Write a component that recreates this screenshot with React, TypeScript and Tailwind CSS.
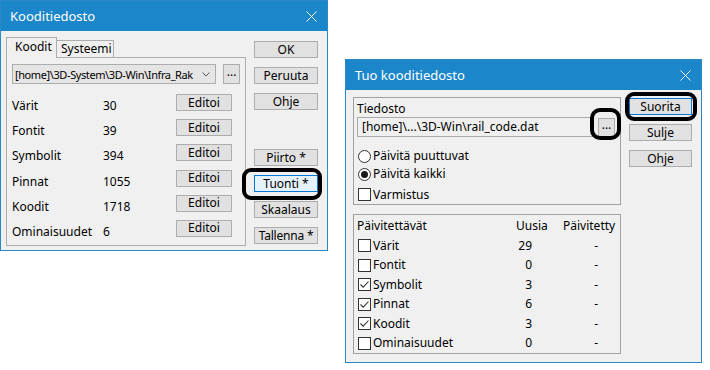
import React from "react";

function Btn({ children, className = "" }: { children: React.ReactNode; className?: string }) {
  return (
    <div
      className={
        "flex items-center justify-center border bg-[#e1e1e1] text-[12px] leading-none whitespace-nowrap " +
        (className.includes("border-[") ? className : "border-[#adadad] " + className)
      }
    >
      {children}
    </div>
  );
}

function TitleBar({ title, pl }: { title: string; pl: string }) {
  return (
    <div className={"flex h-[30px] items-center justify-between bg-[#1b86c9] text-white " + pl}>
      <span className="text-[13px] leading-none">{title}</span>
      <svg width="11" height="11" viewBox="0 0 11 11" className="mr-[10px]">
        <path d="M0.5 0.5 L10.5 10.5 M10.5 0.5 L0.5 10.5" stroke="white" strokeWidth="1" />
      </svg>
    </div>
  );
}

function Check({ checked }: { checked?: boolean }) {
  return (
    <div className="flex h-[13px] w-[13px] shrink-0 items-center justify-center border border-[#333] bg-white">
      {checked && (
        <svg width="11" height="11" viewBox="0 0 11 11">
          <path d="M1.5 5.5 L4.2 8.2 L9.5 2.5" stroke="#333" strokeWidth="1.1" fill="none" />
        </svg>
      )}
    </div>
  );
}

function Radio({ checked }: { checked?: boolean }) {
  return (
    <div className="flex h-[13px] w-[13px] shrink-0 items-center justify-center rounded-full border border-[#333] bg-white">
      {checked && <div className="h-[7px] w-[7px] rounded-full bg-[#1a1a1a]" />}
    </div>
  );
}

const rows1 = [
  ["Värit", "30"],
  ["Fontit", "39"],
  ["Symbolit", "394"],
  ["Pinnat", "1055"],
  ["Koodit", "1718"],
  ["Ominaisuudet", "6"],
];

const rows2: [string, string, boolean][] = [
  ["Värit", "29", false],
  ["Fontit", "0", false],
  ["Symbolit", "3", true],
  ["Pinnat", "6", true],
  ["Koodit", "3", true],
  ["Ominaisuudet", "0", false],
];

export default function App() {
  return (
    <div className="relative h-[370px] w-[710px] overflow-hidden bg-white font-['Noto_Sans',sans-serif] text-[12px] text-black">
      {/* Dialog 1 */}
      <div className="absolute left-0 top-0 flex h-[251px] w-[328px] flex-col border border-[#2a88c9] bg-[#f0f0f0]">
        <TitleBar title="Kooditiedosto" pl="pl-[9px]" />
        <div className="flex pl-[5px] pt-[6px]">
          <div className="flex w-[240px] flex-col">
            <div className="flex h-[20px] items-end">
              <div className="relative z-10 -mb-px flex h-[21px] w-[51px] items-start border border-b-0 border-[#adadad] bg-[#f0f0f0] pl-[8px] pt-[1px] leading-[16px]">
                Koodit
              </div>
              <div className="flex h-[17px] w-[57px] items-center whitespace-nowrap border border-l-0 border-b-0 border-[#adadad] bg-[#f0f0f0] pl-[4px] leading-none">
                Systeemi
              </div>
            </div>
            <div className="flex h-[189px] flex-col border border-[#adadad] px-[5px] pt-[6px]">
              <div className="flex items-center">
                <div className="flex h-[20px] w-[205px] items-center justify-between border border-[#adadad] bg-[#e5e5e5] pl-[2px] pr-[5px]">
                  <span className="whitespace-nowrap text-[11px] leading-none tracking-[-0.4px]">[home]\3D-System\3D-Win\Infra_Rak</span>
                  <svg width="8" height="5" viewBox="0 0 8 5" className="ml-[2px] shrink-0">
                    <path d="M0.5 0.5 L4 4 L7.5 0.5" stroke="#555" strokeWidth="1" fill="none" />
                  </svg>
                </div>
                <Btn className="ml-[7px] h-[20px] w-[17px] pb-[4px]">...</Btn>
              </div>
              <div className="mt-[10px] flex flex-col">
                {rows1.map(([l, n]) => (
                  <div key={l} className="flex h-[25.2px] items-start">
                    <span className="w-[91px] pt-[4px] leading-[16px]">{l}</span>
                    <span className="w-[73px] pt-[4px] leading-[16px]">{n}</span>
                    <Btn className="h-[17px] w-[56px]">Editoi</Btn>
                  </div>
                ))}
              </div>
            </div>
          </div>
          <div className="ml-[8px] flex w-[64px] flex-col pt-[4px]">
            <Btn className="h-[17px]">OK</Btn>
            <Btn className="mt-[9px] h-[17px]">Peruuta</Btn>
            <Btn className="mt-[9px] h-[17px]">Ohje</Btn>
            <Btn className="mt-[39px] h-[17px]">Piirto *</Btn>
            <Btn className="border-[#0078d7] mt-[9px] h-[17px] bg-[#e5f1fb]">Tuonti *</Btn>
            <Btn className="mt-[9px] h-[17px]">Skaalaus</Btn>
            <Btn className="mt-[9px] h-[17px] tracking-[-0.2px]">Tallenna *</Btn>
          </div>
        </div>
      </div>

      {/* Dialog 2 */}
      <div className="absolute left-[345px] top-[59px] flex h-[304px] w-[357px] flex-col border border-[#2a88c9] bg-[#f0f0f0]">
        <TitleBar title="Tuo kooditiedosto" pl="pl-[9px]" />
        <div className="flex pl-[7px] pt-[7px]">
          <div className="flex w-[268px] flex-col">
            <div className="flex h-[108px] flex-col border border-[#a0a0a0] pl-[3px] pt-[3px]">
              <span className="leading-[16px]">Tiedosto</span>
              <div className="flex items-center">
                <div className="flex h-[20px] w-[236px] items-center border border-[#a9a9a9] pl-[4px]">
                  <span className="leading-none">[home]\...\3D-Win\rail_code.dat</span>
                </div>
                <Btn className="ml-[5px] h-[19px] w-[17px] pb-[4px]">...</Btn>
              </div>
              <div className="mt-[10px] flex h-[19px] items-center gap-[2px] pl-[1px]">
                <Radio />
                <span>Päivitä puuttuvat</span>
              </div>
              <div className="flex h-[19px] items-center gap-[2px] pl-[1px]">
                <Radio checked />
                <span>Päivitä kaikki</span>
              </div>
              <div className="mt-[2px] flex h-[19px] items-center gap-[2px] pl-[1px]">
                <Check />
                <span>Varmistus</span>
              </div>
            </div>
            <div className="mt-[9px] flex h-[140px] flex-col border border-[#a0a0a0] pt-[1.7px]">
              <div className="flex h-[19.6px] items-center">
                <span className="w-[162px] pl-[3px]">Päivitettävät</span>
                <span className="w-[47px]">Uusia</span>
                <span>Päivitetty</span>
              </div>
              {rows2.map(([l, n, c]) => (
                <div key={l} className="flex h-[19.6px] items-center">
                  <div className="flex w-[148px] items-center gap-[2px] pl-[4px]">
                    <Check checked={c} />
                    <span>{l}</span>
                  </div>
                  <span className="w-[30px] text-right">{n}</span>
                  <span className="w-[66px] text-right">-</span>
                </div>
              ))}
            </div>
          </div>
          <div className="ml-[8px] flex w-[63px] flex-col pt-[1px]">
            <Btn className="border-[#0078d7] h-[17px]">Suorita</Btn>
            <Btn className="mt-[9px] h-[17px]">Sulje</Btn>
            <Btn className="mt-[9px] h-[17px]">Ohje</Btn>
          </div>
        </div>
      </div>

      {/* Annotations */}
      <div className="absolute left-[242px] top-[168px] h-[32px] w-[80px] rounded-[9px] border-[4px] border-black" />
      <div className="absolute left-[590px] top-[108px] h-[32px] w-[31px] rounded-[10px] border-[4px] border-black" />
      <div className="absolute left-[625px] top-[92px] h-[29px] w-[72px] rounded-[9px] border-[4px] border-black" />
    </div>
  );
}
